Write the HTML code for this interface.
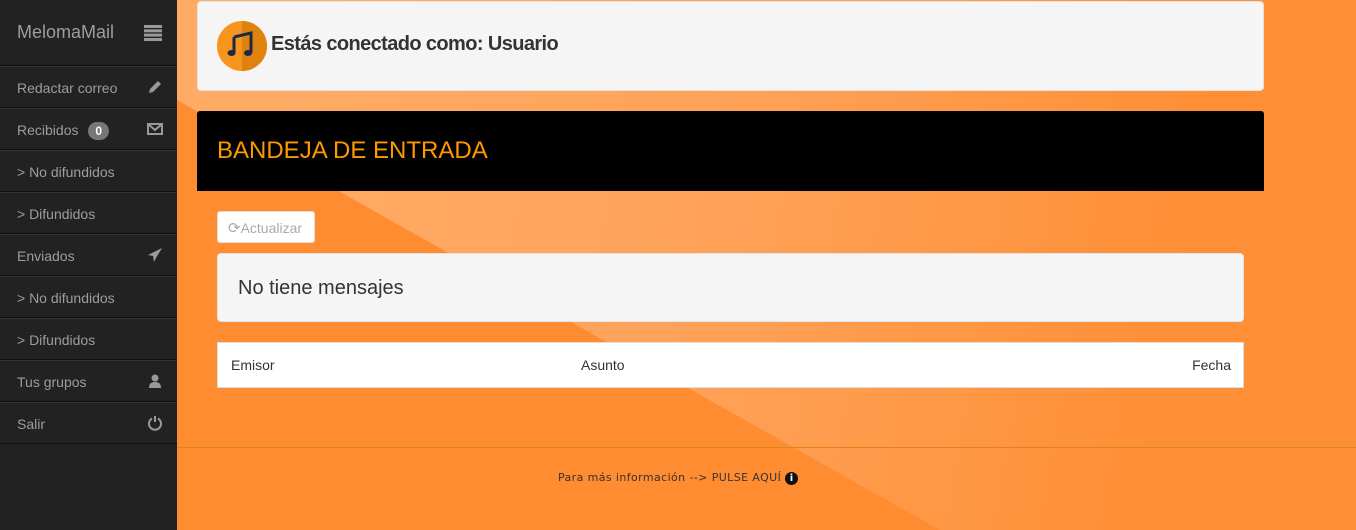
<!DOCTYPE html>
<html><head><meta charset="utf-8"><style>
*{box-sizing:border-box;margin:0;padding:0}
body{width:1356px;height:530px;overflow:hidden;font-family:"Liberation Sans",Arial,sans-serif;background:#ff8c30;position:relative}
.band{position:absolute;left:0;top:0;width:1356px;height:530px;clip-path:polygon(177px 100px,940px 530px,1356px 530px,1356px 0,177px 0);background:linear-gradient(100deg,#ffab66 20%,#ffa35a 50%,#ff8f36 85%)}
.side{position:absolute;left:0;top:0;width:177px;height:530px;background:#222}
.brand{height:66px;border-bottom:1px solid #111;color:#9d9d9d;font-size:18px;padding:22px 17px;position:relative}
.item{height:42px;border-top:1px solid #333;border-bottom:1px solid #111;color:#9d9d9d;font-size:14px;padding:13px 17px;position:relative}
.ic{position:absolute;right:14px;top:12px;width:16px;height:16px}
.badge{display:inline-block;background:#777;color:#fff;font-weight:bold;font-size:12px;border-radius:10px;padding:2px 7px;margin-left:6px}
.card{position:absolute;background:#f5f5f5;border:1px solid #e3e3e3;border-radius:4px}
</style></head><body>
<div class="band"></div>
<div class="side">
<div class="brand">MelomaMail
<svg style="position:absolute;right:15px;top:25px" width="18" height="16"><g fill="#999"><rect y="0" width="18" height="3"/><rect y="4.3" width="18" height="3"/><rect y="8.6" width="18" height="3"/><rect y="13" width="18" height="3"/></g></svg></div>
<div class="item">Redactar correo<svg class="ic" viewBox="0 0 16 16"><path d="M2 14l1-4 8-8 3 3-8 8z" fill="#999"/></svg></div>
<div class="item">Recibidos <span class="badge">0</span><svg class="ic" viewBox="0 0 16 16"><path d="M1 3h14v10H1z M1 3l7 6 7-6" fill="none" stroke="#999" stroke-width="2"/></svg></div>
<div class="item">&gt; No difundidos</div>
<div class="item">&gt; Difundidos</div>
<div class="item">Enviados<svg class="ic" viewBox="0 0 16 16"><path d="M15 1L1 8l5 1 1 6 2-4z" fill="#999"/></svg></div>
<div class="item">&gt; No difundidos</div>
<div class="item">&gt; Difundidos</div>
<div class="item">Tus grupos<svg class="ic" viewBox="0 0 16 16"><circle cx="8" cy="5" r="3.5" fill="#999"/><path d="M2 15c0-5 3-6 6-6s6 1 6 6z" fill="#999"/></svg></div>
<div class="item">Salir<svg class="ic" viewBox="0 0 16 16"><path d="M5 3.5A6 6 0 1 0 11 3.5" fill="none" stroke="#999" stroke-width="2"/><path d="M8 1v6" stroke="#999" stroke-width="2"/></svg></div>
</div>
<div class="card" style="left:197px;top:1px;width:1067px;height:90px">
<svg style="position:absolute;left:19px;top:19px" width="50" height="50" viewBox="0 0 50 50"><circle cx="25" cy="25" r="25" fill="#f7941d"/><path d="M25 0a25 25 0 0 1 0 50z" fill="#e0820f"/><path d="M17 16l17-4v20" fill="none" stroke="#1a2a44" stroke-width="3"/><ellipse cx="14.5" cy="32" rx="4" ry="3" fill="#1a2a44"/><ellipse cx="31" cy="32" rx="4" ry="3" fill="#1a2a44"/><path d="M17 16v16" stroke="#1a2a44" stroke-width="3"/></svg>
<div style="position:absolute;left:73px;top:31px;font-size:20px;color:#333;font-weight:bold;letter-spacing:-0.6px">Estás conectado como: Usuario</div></div>
<div style="position:absolute;left:197px;top:111px;width:1067px;height:80px;background:#000;border-radius:3px 3px 0 0;color:#f90;font-size:24px;padding:26px 20px">BANDEJA DE ENTRADA</div>
<div style="position:absolute;left:217px;top:211px;width:98px;height:32px;background:#fff;border:1px solid #ddd;border-radius:3px;color:#aaa;font-size:14px;padding:7px 0 0 10px"><span style="font-size:15px">⟳</span>Actualizar</div>
<div class="card" style="left:217px;top:253px;width:1027px;height:69px;font-size:20px;color:#333;padding:23px 20px">No tiene mensajes</div>
<div style="position:absolute;left:217px;top:342px;width:1027px;height:46px;background:#fff;border:1px solid #ddd;font-size:14px;color:#333">
<span style="position:absolute;left:13px;top:14px">Emisor</span><span style="position:absolute;left:363px;top:14px">Asunto</span><span style="position:absolute;right:12px;top:14px">Fecha</span></div>
<div style="position:absolute;left:177px;top:447px;width:1179px;border-top:1px solid #d9861a"></div>
<div style="position:absolute;left:558px;top:471px;font-size:11px;color:#333;font-family:'DejaVu Sans',sans-serif;letter-spacing:0.4px">Para más información --&gt; PULSE AQUÍ <span style="display:inline-block;width:13px;height:13px;border-radius:50%;background:#111;color:#fff;font-size:10px;text-align:center;line-height:13px;font-weight:bold">i</span></div>
</body></html>
